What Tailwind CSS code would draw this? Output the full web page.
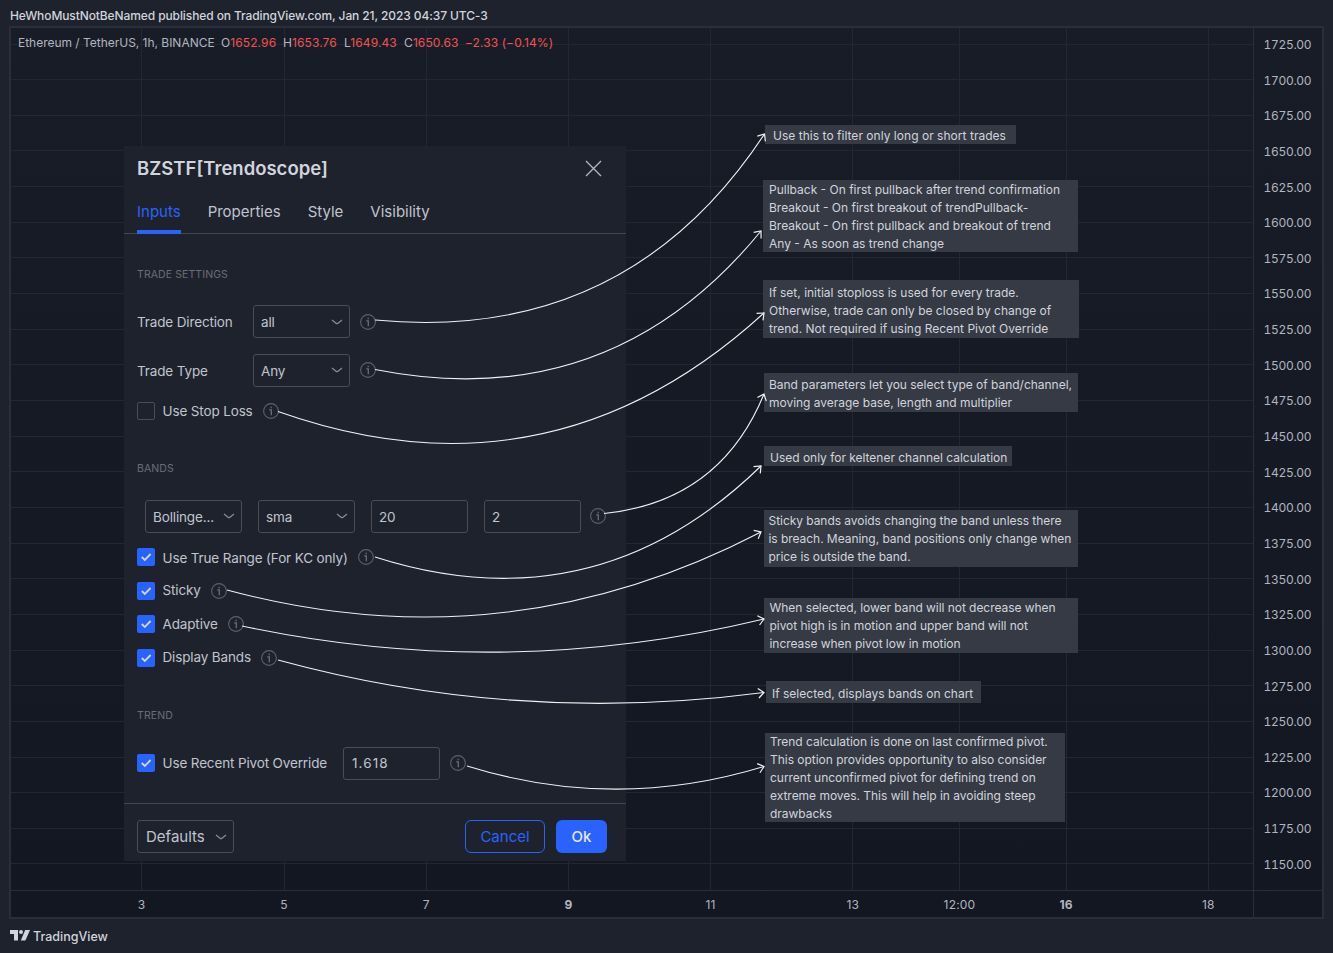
<!DOCTYPE html>
<html lang="en">
<head>
  <meta charset="UTF-8" />
  <meta name="viewport" content="width=device-width, initial-scale=1.0" />
  <title>BZSTF[Trendoscope] - TradingView</title>
  <script src="https://cdn.jsdelivr.net/npm/@tailwindcss/browser@4"></script>
</head>
<body class="w-[1333px] h-[953px] overflow-hidden bg-[#1e222d] font-['Inter',sans-serif] text-[#b2b5be]">

  <!-- shared icons -->
  <svg class="hidden">
    <symbol id="info" viewBox="0 0 16 16">
      <circle cx="8" cy="8" r="7.4" fill="none" stroke="#5d606b" stroke-width="1.1" />
      <path d="M6.2 6.9h2.1v5.3M8.2 3.7v1.5" fill="none" stroke="#6a6d78" stroke-width="1.3" />
    </symbol>
    <symbol id="chevron" viewBox="0 0 12 6">
      <path d="M1 .9l4.3 3.5q.7.5 1.4 0L11 .9" fill="none" stroke="#868993" stroke-width="1.3" />
    </symbol>
    <symbol id="check" viewBox="0 0 18 18">
      <path d="M4.8 9l3 3 5.8-6" fill="none" stroke="#d1d4dc" stroke-width="1.8" />
    </symbol>
  </svg>

  <div class="flex flex-col h-full">
    <header class="h-[26px] pl-[10px] pt-[6px] text-[12px] leading-[20px] font-medium tracking-[-0.1px] text-[#d1d4dc] whitespace-nowrap">HeWhoMustNotBeNamed published on TradingView.com, Jan 21, 2023 04:37 UTC-3</header>

    <!-- chart -->
    <main class="relative ml-[9px] w-[1315px] h-[893px] border-2 border-[#2a2e39] bg-linear-to-b from-[#181c27] to-[#131722] flex flex-col">
      <svg class="absolute left-0 top-0" width="1242" height="862" viewBox="11 28 1242 862">
        <g id="grid" stroke="#242733" stroke-width="1" shape-rendering="crispEdges"></g>
      </svg>

      <div class="flex h-[862px]">
        <div class="relative w-[1242px] pl-[7px] pt-[6px]">
          <div class="flex text-[12px] leading-[18px] whitespace-nowrap">
            <span class="w-[203px] tracking-[-0.02px]">Ethereum / TetherUS, 1h, BINANCE</span>
            <span class="w-[62px] tracking-[0.1px]">O<span class="text-[#ef5350]">1652.96</span></span>
            <span class="w-[61px] tracking-[0.1px]">H<span class="text-[#ef5350]">1653.76</span></span>
            <span class="w-[60px] tracking-[0.1px]">L<span class="text-[#ef5350]">1649.43</span></span>
            <span class="w-[61px] tracking-[0.1px]">C<span class="text-[#ef5350]">1650.63</span></span>
            <span class="text-[#ef5350] tracking-[0.08px]">−2.33 (−0.14%)</span>
          </div>
        </div>
        <div id="prices" class="w-[69px] -mt-[1px] border-l border-[#2a2e39] pl-[9.5px] text-[12px] tracking-[-0.3px] tabular-nums"></div>
      </div>

      <div class="flex h-[27px] border-t border-[#2a2e39] text-[12px] leading-[27px] text-center tracking-[0.2px]">
        <div class="flex w-[1242px] pl-[59.5px]">
          <span class="w-[142.25px] shrink-0">3</span>
          <span class="w-[142.25px] shrink-0">5</span>
          <span class="w-[142.25px] shrink-0">7</span>
          <span class="w-[142.25px] shrink-0 font-bold">9</span>
          <span class="w-[142.25px] shrink-0">11</span>
          <span class="w-[142.25px] shrink-0">13</span>
          <span class="w-[71px] shrink-0">12:00</span>
          <span class="w-[142.25px] shrink-0 font-bold">16</span>
          <span class="w-[142.25px] shrink-0">18</span>
        </div>
        <div class="w-[69px] border-l border-[#2a2e39]"></div>
      </div>
    </main>

    <footer class="flex items-center gap-[3px] h-[34px] pl-[10px] pt-[2px] text-[12.5px] font-medium text-[#d1d4dc]">
      <svg class="-mt-[3px]" width="20" height="11" viewBox="0 0 20 11" fill="#d1d4dc">
        <path d="M0 0h8v10.5H4V4H0z" />
        <circle cx="11" cy="2" r="2" />
        <path d="M15.2 0H20l-4.6 10.5h-4.6z" />
      </svg>
      <span>TradingView</span>
    </footer>
  </div>

  <!-- settings dialog -->
  <section class="absolute left-[124px] top-[146px] w-[502px] h-[715px] bg-[#1e222d] flex flex-col text-[13.5px] tracking-[-0.14px] whitespace-nowrap text-[#c1c4cd]">
    <div class="flex items-center justify-between h-[44px] pl-[13px] pr-[24px]">
      <h1 class="pt-[1px] text-[18.5px] tracking-normal font-semibold text-[#d1d4dc]">BZSTF[Trendoscope]</h1>
      <svg width="17" height="17" viewBox="0 0 17 17" stroke="#b2b5be" stroke-width="1.4"><path d="M1 1l15 15M16 1L1 16" /></svg>
    </div>
    <nav class="flex gap-[27px] h-[44px] pl-[13px] border-b border-[#434651] text-[15px] leading-[43px] tracking-normal">
      <span class="h-[44px] border-b-4 border-[#2962ff] text-[#2962ff]">Inputs</span>
      <span>Properties</span>
      <span>Style</span>
      <span>Visibility</span>
    </nav>

    <div class="flex flex-col h-[569px] pl-[13px]">
      <h2 class="mt-[32px] h-[17px] leading-[18px] text-[10.5px] tracking-[0.1px] text-[#6a6d78]">TRADE SETTINGS</h2>
      <div class="flex items-center mt-[22px] h-[33px]">
        <span class="w-[116px] pt-[2px]">Trade Direction</span>
        <div class="flex items-center justify-between w-[97px] h-[33px] border border-[#4a4d58] rounded-[3px] pl-[7px] pr-[6px]"><span class="pt-[1px]">all</span><svg width="12" height="6"><use href="#chevron" /></svg></div>
        <svg class="ml-[10px]" width="16" height="16"><use href="#info" /></svg>
      </div>
      <div class="flex items-center mt-[15px] h-[34px]">
        <span class="w-[116px] pt-[2px]">Trade Type</span>
        <div class="flex items-center justify-between w-[97px] h-[33px] border border-[#4a4d58] rounded-[3px] pl-[7px] pr-[6px]"><span class="pt-[2px]">Any</span><svg width="12" height="6"><use href="#chevron" /></svg></div>
        <svg class="ml-[10px]" width="16" height="16"><use href="#info" /></svg>
      </div>
      <div class="flex items-center mt-[15px] h-[18px]">
        <i class="w-[18px] h-[18px] border border-[#4a4d58] rounded-[2px]"></i>
        <span class="ml-[7.5px]">Use Stop Loss</span>
        <svg class="ml-[10px]" width="16" height="16"><use href="#info" /></svg>
      </div>

      <h2 class="mt-[40px] h-[17px] leading-[18px] text-[10.5px] tracking-[0.1px] text-[#6a6d78]">BANDS</h2>
      <div class="flex items-center mt-[22px] h-[34px] pl-[8px] gap-[16px]">
        <div class="flex items-center justify-between w-[97px] h-[33px] border border-[#4a4d58] rounded-[3px] pl-[7px] pr-[6px]"><span class="pt-[2px]">Bollinge...</span><svg width="12" height="6"><use href="#chevron" /></svg></div>
        <div class="flex items-center justify-between w-[97px] h-[33px] border border-[#4a4d58] rounded-[3px] pl-[7px] pr-[6px]"><span class="pt-[2px]">sma</span><svg width="12" height="6"><use href="#chevron" /></svg></div>
        <div class="flex items-center w-[97px] h-[33px] border border-[#4a4d58] rounded-[3px] pl-[7px] pt-[2px]">20</div>
        <div class="flex items-center w-[97px] h-[33px] border border-[#4a4d58] rounded-[3px] pl-[7px] pt-[2px]">2</div>
        <svg class="-ml-[7px]" width="16" height="16"><use href="#info" /></svg>
      </div>
      <div class="flex items-center mt-[15px] h-[18px]">
        <svg class="bg-[#2962ff] rounded-[2px]" width="18" height="18"><use href="#check" /></svg>
        <span class="ml-[7.5px] pt-[2px]">Use True Range (For KC only)</span>
        <svg class="ml-[10px]" width="16" height="16"><use href="#info" /></svg>
      </div>
      <div class="flex items-center mt-[15.5px] h-[18px]">
        <svg class="bg-[#2962ff] rounded-[2px]" width="18" height="18"><use href="#check" /></svg>
        <span class="ml-[7.5px]">Sticky</span>
        <svg class="ml-[10px]" width="16" height="16"><use href="#info" /></svg>
      </div>
      <div class="flex items-center mt-[15.5px] h-[18px]">
        <svg class="bg-[#2962ff] rounded-[2px]" width="18" height="18"><use href="#check" /></svg>
        <span class="ml-[7.5px] pt-[1px]">Adaptive</span>
        <svg class="ml-[10px]" width="16" height="16"><use href="#info" /></svg>
      </div>
      <div class="flex items-center mt-[15.5px] h-[18px]">
        <svg class="bg-[#2962ff] rounded-[2px]" width="18" height="18"><use href="#check" /></svg>
        <span class="ml-[7.5px]">Display Bands</span>
        <svg class="ml-[10px]" width="16" height="16"><use href="#info" /></svg>
      </div>

      <h2 class="mt-[40px] h-[17px] leading-[18px] text-[10.5px] tracking-[0.1px] text-[#6a6d78]">TREND</h2>
      <div class="flex items-center mt-[22.5px] h-[34px]">
        <svg class="bg-[#2962ff] rounded-[2px]" width="18" height="18"><use href="#check" /></svg>
        <span class="ml-[7.5px] w-[180.5px]">Use Recent Pivot Override</span>
        <div class="flex items-center w-[97px] h-[33px] border border-[#4a4d58] rounded-[3px] pl-[8px] pt-[1px] tracking-[1.1px]">1.618</div>
        <svg class="ml-[10px]" width="16" height="16"><use href="#info" /></svg>
      </div>
    </div>

    <div class="flex items-center h-[58px] border-t border-[#434651] pl-[13px] pt-[8px] text-[15px] tracking-normal">
      <div class="flex items-center justify-between w-[97px] h-[33px] border border-[#4a4d58] rounded-[3px] pl-[8px] pr-[6px]"><span class="pt-[2px]">Defaults</span><svg width="12" height="6"><use href="#chevron" /></svg></div>
      <button class="ml-[231px] w-[80px] h-[33px] pt-[2px] border border-[#2962ff] rounded-[6px] text-[#2962ff]">Cancel</button>
      <button class="ml-[11px] w-[51px] h-[33px] pt-[1px] rounded-[6px] bg-[#2962ff] text-[#e4e9fb] font-medium">Ok</button>
    </div>
  </section>

  <!-- notes -->
  <div class="text-[12px] leading-[18px] whitespace-nowrap text-[#d1d4dc]">
    <p class="absolute left-[765px] top-[125px] w-[251px] h-[19px] pl-[8px] pt-[2px] tracking-[0.03px] bg-[#363a45]">Use this to filter only long or short trades</p>
    <p class="absolute left-[763px] top-[180px] w-[315px] h-[72px] pl-[6px] pt-[1px] bg-[#363a45]">Pullback - On first pullback after trend confirmation<br>Breakout - On first breakout of trendPullback-<br>Breakout - On first pullback and breakout of trend<br>Any - As soon as trend change</p>
    <p class="absolute left-[763px] top-[280px] w-[316px] h-[58px] pl-[6px] pt-[4px] bg-[#363a45]">If set, initial stoploss is used for every trade.<br>Otherwise, trade can only be closed by change of<br>trend. Not required if using Recent Pivot Override</p>
    <p class="absolute left-[764px] top-[373px] w-[314px] h-[39px] pl-[5px] pt-[3px] tracking-[-0.02px] bg-[#363a45]">Band parameters let you select type of band/channel,<br>moving average base, length and multiplier</p>
    <p class="absolute left-[764px] top-[446px] w-[248px] h-[20px] pl-[6px] pt-[3px] tracking-[-0.02px] bg-[#363a45]">Used only for keltener channel calculation</p>
    <p class="absolute left-[764px] top-[510px] w-[314px] h-[57px] pl-[4.5px] pt-[2px] tracking-[-0.05px] bg-[#363a45]">Sticky bands avoids changing the band unless there<br>is breach. Meaning, band positions only change when<br>price is outside the band.</p>
    <p class="absolute left-[764px] top-[598px] w-[314px] h-[55px] pl-[5.5px] pt-[1px] tracking-[-0.05px] bg-[#363a45]">When selected, lower band will not decrease when<br>pivot high is in motion and upper band will not<br>increase when pivot low in motion</p>
    <p class="absolute left-[766px] top-[681px] w-[215px] h-[22px] pl-[6px] pt-[4px] bg-[#363a45]">If selected, displays bands on chart</p>
    <p class="absolute left-[765px] top-[733px] w-[300px] h-[89px] pl-[5px] tracking-[-0.03px] bg-[#363a45]">Trend calculation is done on last confirmed pivot.<br>This option provides opportunity to also consider<br>current unconfirmed pivot for defining trend on<br>extreme moves. This will help in avoiding steep<br>drawbacks</p>
  </div>

  <!-- arrows from the info icons to the notes -->
  <svg class="absolute left-0 top-0" width="1333" height="953" fill="none" stroke="#f0f1f4" stroke-width="1.1">
    <marker id="head" viewBox="-8 -7 10 14" markerWidth="10" markerHeight="14" refX="0" refY="0" orient="auto" markerUnits="userSpaceOnUse">
      <path d="M-5.7-4.8L0 0l-5.7 4.8" fill="none" stroke="#f0f1f4" stroke-width="1.2" />
    </marker>
    <path marker-end="url(#head)" d="M375 320Q626 344 764.5 134" />
    <path marker-end="url(#head)" d="M375 369.5Q609.6 416 761 231" />
    <path marker-end="url(#head)" d="M278 411.5Q550.5 508 764 313" />
    <path marker-end="url(#head)" d="M604 513.5Q719.9 501.7 764 394" />
    <path marker-end="url(#head)" d="M375 557Q595.3 627.3 761 466" />
    <path marker-end="url(#head)" d="M227 590Q505 665 761 532" />
    <path marker-end="url(#head)" d="M242 626Q503.8 681.5 764 619" />
    <path marker-end="url(#head)" d="M278 660Q516 725 764 692.5" />
    <path marker-end="url(#head)" d="M467 766Q615 812 764 766.5" />
  </svg>

  <script>
    const step = 35.65;
    let lines = "";
    let labels = "";
    for (let i = 0; i < 24; i++) {
      const y = Math.floor(44 + i * step) + 0.5;
      lines += `<path d="M11 ${y}H1253" />`;
      labels += `<div style="height:${step}px;line-height:${step}px">${1725 - i * 25}.00</div>`;
    }
    for (const x of [141, 284, 426, 568, 710, 852, 959, 1066, 1208]) {
      lines += `<path d="M${x + 0.5} 28V890" />`;
    }
    document.getElementById("grid").innerHTML = lines;
    document.getElementById("prices").innerHTML = labels;
  </script>
</body>
</html>
